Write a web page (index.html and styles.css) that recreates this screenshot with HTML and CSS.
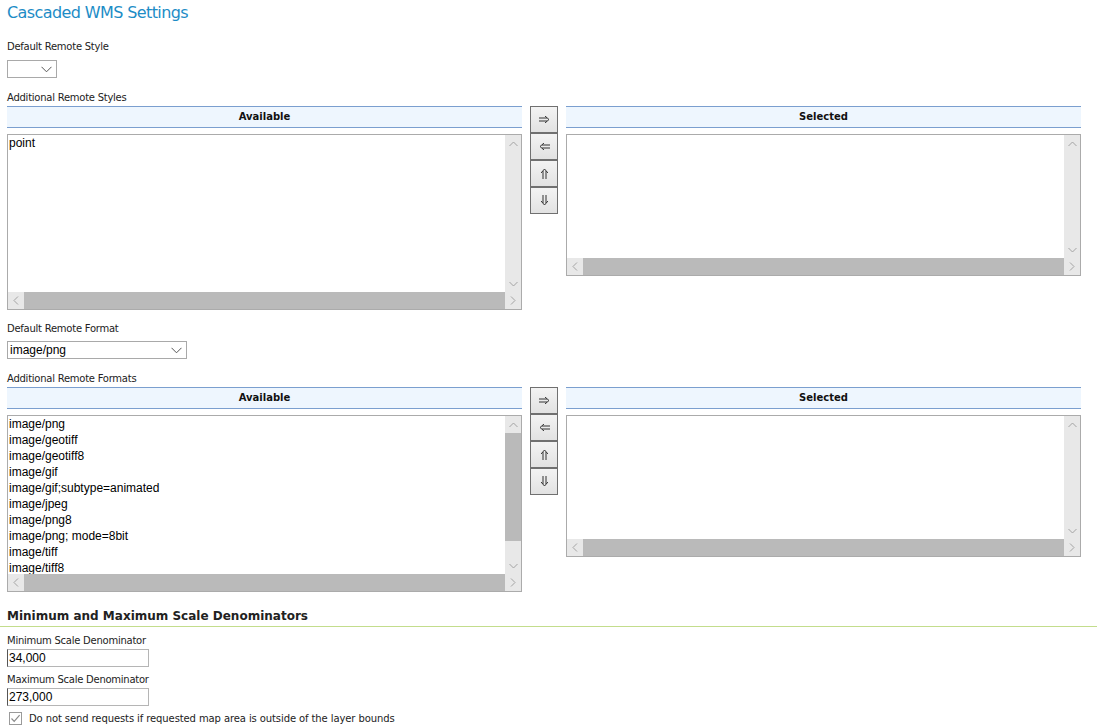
FILE: index.html
```html
<!DOCTYPE html>
<html>
<head>
<meta charset="utf-8">
<link rel="stylesheet" href="styles.css">
</head>
<body>
<div class="page">
  <h1 class="title">Cascaded WMS Settings</h1>

  <div class="label first">Default Remote Style</div>
  <div class="select sel-small"><span class="sel-val"></span><span class="chev"><svg width="11" height="7" viewBox="0 0 11 7"><path d="M0.5 0.8 L5.5 5.8 L10.5 0.8" fill="none" stroke="#555" stroke-width="1"/></svg></span></div>

  <div class="label">Additional Remote Styles</div>
  <div class="picker">
    <div class="pcol">
      <div class="phead">Available</div>
      <div class="listbox lb-tall">
        <div class="lb-content"><div class="item">point</div></div>
        <div class="vbar">
          <span class="arr"><svg width="9" height="6" viewBox="0 0 9 6"><path d="M0.5 5 L4.5 1 L8.5 5" fill="none" stroke="#a3a3a3" stroke-width="1"/></svg></span>
          <span class="vtrack"></span>
          <span class="arr"><svg width="9" height="6" viewBox="0 0 9 6"><path d="M0.5 1 L4.5 5 L8.5 1" fill="none" stroke="#a3a3a3" stroke-width="1"/></svg></span>
        </div>
        <div class="hbar">
          <span class="arr"><svg width="6" height="9" viewBox="0 0 6 9"><path d="M5 0.5 L1 4.5 L5 8.5" fill="none" stroke="#a3a3a3" stroke-width="1"/></svg></span>
          <span class="hthumb"></span>
          <span class="arr"><svg width="6" height="9" viewBox="0 0 6 9"><path d="M1 0.5 L5 4.5 L1 8.5" fill="none" stroke="#a3a3a3" stroke-width="1"/></svg></span>
        </div>
      </div>
    </div>
    <div class="btns">
      <button class="btn" title="Add"><svg width="11" height="7" viewBox="0 0 11 7"><path d="M0 2 H8 M0 5 H8 M6 0 L10 3.5 L6 7" fill="none" stroke="#333" stroke-width="1"/></svg></button>
      <button class="btn" title="Remove"><svg width="11" height="7" viewBox="0 0 11 7"><path d="M3 2 H11 M3 5 H11 M5 0 L1 3.5 L5 7" fill="none" stroke="#333" stroke-width="1"/></svg></button>
      <button class="btn" title="Up"><svg width="7" height="11" viewBox="0 0 7 11"><path d="M2 3 V11 M5 3 V11 M0 5 L3.5 1 L7 5" fill="none" stroke="#333" stroke-width="1"/></svg></button>
      <button class="btn" title="Down"><svg width="7" height="11" viewBox="0 0 7 11"><path d="M2 0 V8 M5 0 V8 M0 6 L3.5 10 L7 6" fill="none" stroke="#333" stroke-width="1"/></svg></button>
    </div>
    <div class="pcol">
      <div class="phead">Selected</div>
      <div class="listbox lb-short">
        <div class="lb-content"></div>
        <div class="vbar">
          <span class="arr"><svg width="9" height="6" viewBox="0 0 9 6"><path d="M0.5 5 L4.5 1 L8.5 5" fill="none" stroke="#a3a3a3" stroke-width="1"/></svg></span>
          <span class="vtrack"></span>
          <span class="arr"><svg width="9" height="6" viewBox="0 0 9 6"><path d="M0.5 1 L4.5 5 L8.5 1" fill="none" stroke="#a3a3a3" stroke-width="1"/></svg></span>
        </div>
        <div class="hbar">
          <span class="arr"><svg width="6" height="9" viewBox="0 0 6 9"><path d="M5 0.5 L1 4.5 L5 8.5" fill="none" stroke="#a3a3a3" stroke-width="1"/></svg></span>
          <span class="hthumb"></span>
          <span class="arr"><svg width="6" height="9" viewBox="0 0 6 9"><path d="M1 0.5 L5 4.5 L1 8.5" fill="none" stroke="#a3a3a3" stroke-width="1"/></svg></span>
        </div>
      </div>
    </div>
  </div>

  <div class="label l-format">Default Remote Format</div>
  <div class="select sel-wide"><span class="sel-val">image/png</span><span class="chev"><svg width="11" height="7" viewBox="0 0 11 7"><path d="M0.5 0.8 L5.5 5.8 L10.5 0.8" fill="none" stroke="#555" stroke-width="1"/></svg></span></div>

  <div class="label">Additional Remote Formats</div>
  <div class="picker">
    <div class="pcol">
      <div class="phead">Available</div>
      <div class="listbox lb-tall2">
        <div class="lb-content">
          <div class="item">image/png</div>
          <div class="item">image/geotiff</div>
          <div class="item">image/geotiff8</div>
          <div class="item">image/gif</div>
          <div class="item">image/gif;subtype=animated</div>
          <div class="item">image/jpeg</div>
          <div class="item">image/png8</div>
          <div class="item">image/png; mode=8bit</div>
          <div class="item">image/tiff</div>
          <div class="item">image/tiff8</div>
        </div>
        <div class="vbar">
          <span class="arr"><svg width="9" height="6" viewBox="0 0 9 6"><path d="M0.5 5 L4.5 1 L8.5 5" fill="none" stroke="#a3a3a3" stroke-width="1"/></svg></span>
          <span class="vtrack"><span class="vthumb"></span></span>
          <span class="arr"><svg width="9" height="6" viewBox="0 0 9 6"><path d="M0.5 1 L4.5 5 L8.5 1" fill="none" stroke="#a3a3a3" stroke-width="1"/></svg></span>
        </div>
        <div class="hbar">
          <span class="arr"><svg width="6" height="9" viewBox="0 0 6 9"><path d="M5 0.5 L1 4.5 L5 8.5" fill="none" stroke="#a3a3a3" stroke-width="1"/></svg></span>
          <span class="hthumb"></span>
          <span class="arr"><svg width="6" height="9" viewBox="0 0 6 9"><path d="M1 0.5 L5 4.5 L1 8.5" fill="none" stroke="#a3a3a3" stroke-width="1"/></svg></span>
        </div>
      </div>
    </div>
    <div class="btns">
      <button class="btn" title="Add"><svg width="11" height="7" viewBox="0 0 11 7"><path d="M0 2 H8 M0 5 H8 M6 0 L10 3.5 L6 7" fill="none" stroke="#333" stroke-width="1"/></svg></button>
      <button class="btn" title="Remove"><svg width="11" height="7" viewBox="0 0 11 7"><path d="M3 2 H11 M3 5 H11 M5 0 L1 3.5 L5 7" fill="none" stroke="#333" stroke-width="1"/></svg></button>
      <button class="btn" title="Up"><svg width="7" height="11" viewBox="0 0 7 11"><path d="M2 3 V11 M5 3 V11 M0 5 L3.5 1 L7 5" fill="none" stroke="#333" stroke-width="1"/></svg></button>
      <button class="btn" title="Down"><svg width="7" height="11" viewBox="0 0 7 11"><path d="M2 0 V8 M5 0 V8 M0 6 L3.5 10 L7 6" fill="none" stroke="#333" stroke-width="1"/></svg></button>
    </div>
    <div class="pcol">
      <div class="phead">Selected</div>
      <div class="listbox lb-short">
        <div class="lb-content"></div>
        <div class="vbar">
          <span class="arr"><svg width="9" height="6" viewBox="0 0 9 6"><path d="M0.5 5 L4.5 1 L8.5 5" fill="none" stroke="#a3a3a3" stroke-width="1"/></svg></span>
          <span class="vtrack"></span>
          <span class="arr"><svg width="9" height="6" viewBox="0 0 9 6"><path d="M0.5 1 L4.5 5 L8.5 1" fill="none" stroke="#a3a3a3" stroke-width="1"/></svg></span>
        </div>
        <div class="hbar">
          <span class="arr"><svg width="6" height="9" viewBox="0 0 6 9"><path d="M5 0.5 L1 4.5 L5 8.5" fill="none" stroke="#a3a3a3" stroke-width="1"/></svg></span>
          <span class="hthumb"></span>
          <span class="arr"><svg width="6" height="9" viewBox="0 0 6 9"><path d="M1 0.5 L5 4.5 L1 8.5" fill="none" stroke="#a3a3a3" stroke-width="1"/></svg></span>
        </div>
      </div>
    </div>
  </div>

  <h2 class="section">Minimum and Maximum Scale Denominators</h2>
  <div class="label l-min">Minimum Scale Denominator</div>
  <div class="textin">34,000</div>
  <div class="label l-max">Maximum Scale Denominator</div>
  <div class="textin">273,000</div>
  <div class="check-row">
    <span class="checkbox"><svg width="11" height="11" viewBox="0 0 11 11"><path d="M1.5 5.5 L4.2 8.3 L9.6 2.2" fill="none" stroke="#8a8a8a" stroke-width="1.2"/></svg></span>
    <span class="check-label">Do not send requests if requested map area is outside of the layer bounds</span>
  </div>
</div>
</body>
</html>
```

FILE: styles.css
```css
html, body {
  margin: 0;
  padding: 0;
  background: #ffffff;
}
.page {
  padding: 0 0 0 7px;
  font-family: "DejaVu Sans", sans-serif;
  font-size: 10px;
  color: #222;
}
.title {
  margin: 0;
  padding-top: 3px;
  font-family: "DejaVu Sans", sans-serif;
  font-weight: normal;
  font-size: 16px;
  letter-spacing: -0.6px;
  line-height: 20px;
  color: #1d8cc6;
}
.label {
  font-size: 10px;
  letter-spacing: -0.25px;
  line-height: 13px;
  color: #222;
  margin-top: 13px;
  margin-bottom: 2px;
}
.label.first { margin-top: 17px; margin-bottom: 7px; }
.select {
  display: flex;
  align-items: center;
  box-sizing: border-box;
  height: 18px;
  border: 1px solid #a9a9a9;
  background: #fff;
}
.sel-small { width: 50px; }
.sel-wide { width: 180px; }
.sel-val {
  flex: 1;
  padding-left: 2px;
  font-family: "Liberation Sans", Arial, sans-serif;
  font-size: 12px;
  color: #000;
}
.chev {
  width: 20px;
  display: flex;
  justify-content: center;
  align-items: center;
}
.picker {
  display: flex;
  align-items: flex-start;
}
.pcol {
  width: 515px;
  flex: none;
}
.phead {
  box-sizing: border-box;
  height: 22px;
  border-top: 1px solid #7b9fcf;
  border-bottom: 1px solid #7b9fcf;
  background: #eef6fe;
  text-align: center;
  font-weight: bold;
  font-size: 10px;
  line-height: 20px;
  color: #111;
}
.btns {
  width: 28px;
  margin: 0 8px;
  display: flex;
  flex-direction: column;
}
.btn {
  box-sizing: border-box;
  width: 28px;
  height: 27px;
  margin: 0;
  padding: 0;
  border: 1px solid #707070;
  background: linear-gradient(#f3f3f3, #e2e2e2);
  display: flex;
  align-items: center;
  justify-content: center;
}
.listbox {
  box-sizing: border-box;
  margin-top: 6px;
  border: 1px solid #ababab;
  display: grid;
  grid-template-columns: 1fr 16px;
  grid-template-rows: 1fr 17px;
  background: #fff;
}
.lb-tall { height: 176px; }
.lb-tall2 { height: 177px; }
.lb-short { height: 142px; }
.lb-content {
  overflow: hidden;
  padding: 0 0 0 1px;
  font-family: "Liberation Sans", Arial, sans-serif;
  font-size: 12px;
  line-height: 16px;
  color: #000;
}
.item { white-space: nowrap; }
.vbar {
  background: #e8e8e8;
  display: flex;
  flex-direction: column;
}
.vtrack {
  flex: 1;
  display: flex;
  flex-direction: column;
}
.vthumb {
  height: 108px;
  background: #bababa;
}
.hbar {
  grid-column: 1 / 3;
  display: flex;
  background: #e8e8e8;
}
.hthumb {
  flex: 1;
  background: #bababa;
}
.arr {
  flex: none;
  width: 16px;
  height: 17px;
  display: flex;
  align-items: center;
  justify-content: center;
}
.l-format { margin-top: 12px; margin-bottom: 6px; }
.section {
  margin: 16px 0 0 -7px;
  padding: 0 0 2px 7px;
  font-size: 12px;
  line-height: 16px;
  font-weight: bold;
  color: #222;
  border-bottom: 1px solid #c3dd8c;
}
.l-min { margin-top: 7px; margin-bottom: 2px; }
.l-max { margin-top: 6px; margin-bottom: 2px; }
.textin {
  box-sizing: border-box;
  width: 142px;
  height: 18px;
  border: 1px solid #b5b5b5;
  border-left-color: #555;
  padding-left: 1px;
  font-family: "Liberation Sans", Arial, sans-serif;
  font-size: 12px;
  line-height: 16px;
  color: #000;
}
.check-row {
  display: flex;
  align-items: center;
  margin-top: 6px;
  padding-left: 2px;
}
.checkbox {
  box-sizing: border-box;
  width: 13px;
  height: 13px;
  border: 1px solid #9a9a9a;
  display: flex;
  align-items: center;
  justify-content: center;
  background: #fff;
}
.check-label {
  margin-left: 7px;
  font-size: 10px;
  letter-spacing: -0.1px;
  color: #222;
}
```
